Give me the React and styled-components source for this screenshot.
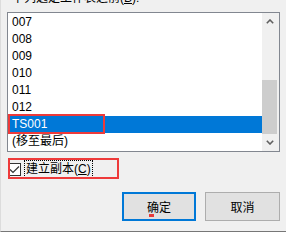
import React from 'react';
import styled, { createGlobalStyle } from 'styled-components';

const GlobalStyle = createGlobalStyle`
  html, body {
    margin: 0;
    padding: 0;
    background: #f0f0f0;
  }
  * { box-sizing: border-box; }
`;

const FONT = `"Liberation Sans", "Noto Sans CJK SC", sans-serif`;

const Dialog = styled.div`
  position: relative;
  width: 286px;
  height: 232px;
  overflow: hidden;
  background: #f0f0f0;
  border-left: 1px solid #dcdcdc;
  border-bottom: 1px solid #777;
  font-family: ${FONT};
  font-size: 12px;
  color: #000;
  padding: 0 6px 0 6px;
`;

const Caption = styled.div`
  height: 14px;
  line-height: 14px;
  margin-top: -9px;
  padding-left: 5px;
  white-space: nowrap;
`;

const Under = styled.span`
  text-decoration: underline;
`;

const ListBox = styled.div`
  display: flex;
  margin-top: 7px;
  width: 273px;
  height: 140px;
  border: 1px solid #828790;
  background: #fff;
`;

const Items = styled.ul`
  flex: 1;
  margin: 0;
  padding: 1px 0 0 0;
  list-style: none;
  overflow: hidden;
`;

const Item = styled.li`
  position: relative;
  height: 17px;
  line-height: 17px;
  padding-left: 4px;
  white-space: nowrap;
  background: ${p => (p.$selected ? '#0078d7' : 'transparent')};
  color: ${p => (p.$selected ? '#fff' : '#000')};

  ${p => p.$selected && `
    &::before {
      content: '';
      position: absolute;
      left: 1px;
      top: 0;
      bottom: 0;
      border-left: 1px dotted rgba(255,255,255,0.85);
    }
  `}
`;

const ScrollBar = styled.div`
  width: 17px;
  display: flex;
  flex-direction: column;
  background: #f0f0f0;
`;

const Arrow = styled.div`
  height: 17px;
  display: flex;
  align-items: center;
  justify-content: center;
  padding-right: 2px;
`;

const Track = styled.div`
  flex: 1;
  display: flex;
  flex-direction: column;
  justify-content: flex-end;
`;

const Thumb = styled.div`
  width: 15px;
  height: 54px;
  background: #cdcdcd;
`;

const CheckRow = styled.div`
  display: flex;
  align-items: center;
  gap: 3px;
  margin-top: 8px;
  padding-left: 1px;
  height: 18px;
`;

const CheckBox = styled.div`
  width: 13px;
  height: 13px;
  border: 1px solid #333;
  background: #fff;
  display: flex;
  align-items: center;
  justify-content: center;
`;

const CheckLabel = styled.span`
  height: 18px;
  line-height: 16px;
  padding: 0 1px;
  border: 1px dotted #000;
  white-space: nowrap;
`;

const ButtonRow = styled.div`
  display: flex;
  justify-content: flex-end;
  gap: 9px;
  margin-top: 14px;
  padding-right: 0;
`;

const Button = styled.div`
  position: relative;
  width: ${p => (p.$default ? '74px' : '75px')};
  height: 29px;
  background: #e1e1e1;
  border: ${p => (p.$default ? '2px solid #0078d7' : '1px solid #adadad')};
  display: flex;
  align-items: center;
  justify-content: center;
  font-size: 12px;
`;

const Mark = styled.span`
  position: absolute;
  left: 25px;
  bottom: 2px;
  width: 5px;
  height: 3px;
  background: #e83a3a;
`;

const RedBox = styled.div`
  position: absolute;
  border: 2px solid #ee3a3a;
  pointer-events: none;
`;

const UpIcon = () => (
  <svg width="8" height="5" viewBox="0 0 8 5">
    <polyline points="0.8,4.2 4,1 7.2,4.2" fill="none" stroke="#606060" strokeWidth="1.6" />
  </svg>
);

const DownIcon = () => (
  <svg width="8" height="5" viewBox="0 0 8 5">
    <polyline points="0.8,0.8 4,4 7.2,0.8" fill="none" stroke="#606060" strokeWidth="1.6" />
  </svg>
);

const sheets = ['007', '008', '009', '010', '011', '012', 'TS001', '(移至最后)'];

export default function App() {
  return (
    <>
      <GlobalStyle />
      <Dialog>
        <Caption>下列选定工作表之前(<Under>B</Under>):</Caption>
        <ListBox>
          <Items>
            {sheets.map(s => (
              <Item key={s} $selected={s === 'TS001'}>{s}</Item>
            ))}
          </Items>
          <ScrollBar>
            <Arrow><UpIcon /></Arrow>
            <Track><Thumb /></Track>
            <Arrow><DownIcon /></Arrow>
          </ScrollBar>
        </ListBox>
        <CheckRow>
          <CheckBox>
            <svg width="11" height="9" viewBox="0 0 11 9">
              <polyline points="1,4.5 4,7.5 10,1.5" fill="none" stroke="#333" strokeWidth="1.2" />
            </svg>
          </CheckBox>
          <CheckLabel>建立副本(<Under>C</Under>)</CheckLabel>
        </CheckRow>
        <ButtonRow>
          <Button $default>确定<Mark /></Button>
          <Button>取消</Button>
        </ButtonRow>
        <RedBox style={{ left: 7, top: 114, width: 97, height: 20 }} />
        <RedBox style={{ left: 7, top: 158, width: 111, height: 21 }} />
      </Dialog>
    </>
  );
}
